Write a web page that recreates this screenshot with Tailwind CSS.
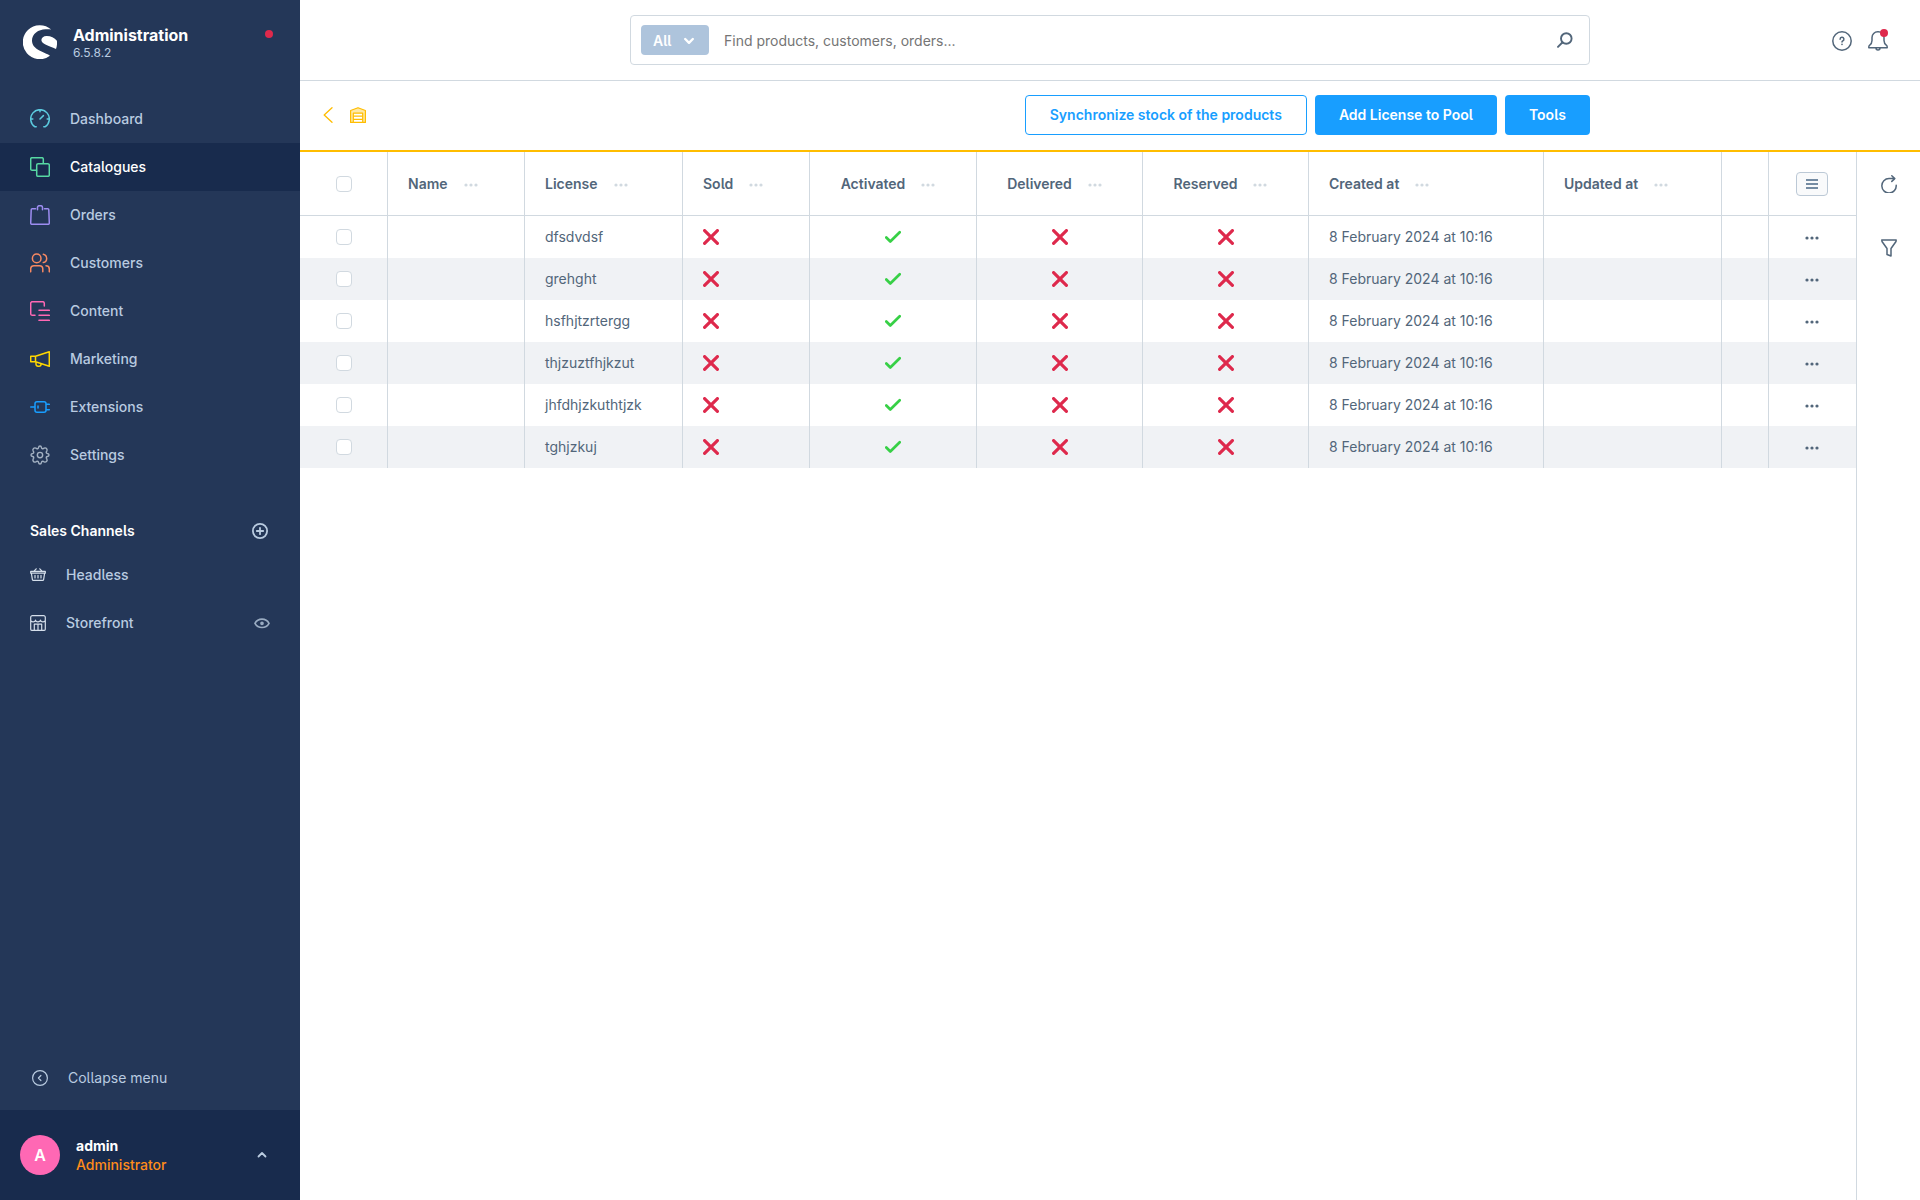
<!DOCTYPE html>
<html lang="en">
<head>
<meta charset="utf-8">
<meta name="viewport" content="width=device-width, initial-scale=1">
<title>License pool | Administration</title>
<script src="https://cdn.jsdelivr.net/npm/@tailwindcss/browser@4"></script>
</head>
<body class="flex min-h-screen bg-white font-['Inter',sans-serif] text-sm text-[#52667a] [font-feature-settings:'cv05']">

<svg class="hidden" aria-hidden="true">
  <symbol id="dots" viewBox="0 0 14 4"><circle cx="2" cy="2" r="1.6"/><circle cx="7" cy="2" r="1.6"/><circle cx="12" cy="2" r="1.6"/></symbol>
  <symbol id="cross" viewBox="0 0 16 16"><path d="M1.600 1.600l12.800 12.800M14.400 1.600L1.600 14.400" fill="none" stroke="currentColor" stroke-width="3.200" stroke-linecap="round"/></symbol>
  <symbol id="check" viewBox="0 0 16 16"><path d="M1.300 8.500L5.300 12.500 14.700 3.300" fill="none" stroke="currentColor" stroke-width="2.700" stroke-linecap="round" stroke-linejoin="round"/></symbol>
</svg>

<aside class="flex w-[300px] shrink-0 flex-col bg-[#243758] text-[#b9cbe0]">
  <header class="flex h-[95px] items-start pt-[25px] pl-[23px] pr-[27px]">
    <svg class="size-[34px] shrink-0" viewBox="0 0 34 34" fill="#fff" aria-hidden="true">
      <path d="M28.2 4.6A17 17 0 1 0 27 30.8C25.2 29.3 20.8 28 16.4 25.6 11.6 23 9 20 9 15.600 9 8.600 15.400 4.400 22.500 4.200 24.600 4.100 26.700 4.300 28.200 4.600Z"/>
      <path d="M33 24C34 21 34.300 18.600 33.900 15.800 31.500 12.400 27.500 10.900 23.500 11 20.500 11.100 18.300 12.800 18.400 15.200 18.600 18.800 25.500 20.500 33 24Z"/>
    </svg>
    <div class="ml-4 flex-1">
      <p class="text-base/5 font-bold text-white">Administration</p>
      <p class="text-xs/4">6.5.8.2</p>
    </div>
    <span class="mt-[5px] size-2 rounded-full bg-[#de294c]"></span>
  </header>

  <nav aria-label="Main menu">
    <ul class="font-medium">
      <li><a href="#" class="flex h-12 items-center gap-5 px-[30px]">
        <svg class="size-5" viewBox="0 0 20 20" fill="none" stroke="#5ccbdf" stroke-width="1.500" stroke-linecap="round" stroke-linejoin="round"><path d="M6.200 17.800H5A9.300 9.300 0 1 1 15 17.800H13.800M10 1v1.800M1 10h1.800M17.200 10H19M10 10l3.400-3.400"/></svg>Dashboard</a></li>
      <li><a href="#" aria-current="page" class="flex h-12 items-center gap-5 bg-[#182b4d] px-[30px] text-white">
        <svg class="size-5" viewBox="0 0 20 20" fill="none" stroke="#57d9a3" stroke-width="1.500" stroke-linejoin="round" stroke-linecap="round"><path d="M6.500 13.300H2A1.300 1.300 0 0 1 .7 12V2A1.300 1.300 0 0 1 2 .7h10A1.300 1.300 0 0 1 13.300 2V6"/><rect x="6.700" y="6.700" width="12.600" height="12.600" rx="1.400"/></svg>Catalogues</a></li>
      <li><a href="#" class="flex h-12 items-center gap-5 px-[30px]">
        <svg class="size-5" viewBox="0 0 20 20" fill="none" stroke="#9d8df1" stroke-width="1.500" stroke-linejoin="round" stroke-linecap="round"><path d="M5.500 3.800H2.200A1 1 0 0 0 1.200 4.800L.7 18A1.300 1.300 0 0 0 2 19.300H18A1.300 1.300 0 0 0 19.300 18L18.800 4.800A1 1 0 0 0 17.800 3.800H14.500M7.500 4.800V2.400A1.700 1.700 0 0 1 9.200.7h1.600A1.700 1.700 0 0 1 12.500 2.400V4.800"/></svg>Orders</a></li>
      <li><a href="#" class="flex h-12 items-center gap-5 px-[30px]">
        <svg class="size-5" viewBox="0 0 20 20" fill="none" stroke="#f88962" stroke-width="1.500" stroke-linecap="round"><circle cx="6.700" cy="5.400" r="4.300"/><path d="M.7 18.800V16A3.300 3.300 0 0 1 4 12.700H9.500A3.300 3.300 0 0 1 12.800 16v2.800M13.300 1.200A4.300 4.300 0 0 1 13.300 9.600M16 12.800A3.300 3.300 0 0 1 19.300 16v2.800"/></svg>Customers</a></li>
      <li><a href="#" class="flex h-12 items-center gap-5 px-[30px]">
        <svg class="size-5" viewBox="0 0 20 20" fill="none" stroke="#ff68b4" stroke-width="1.500" stroke-linecap="round" stroke-linejoin="round"><path d="M5 14.300H2.300A1.600 1.600 0 0 1 .7 12.700V2.300A1.600 1.600 0 0 1 2.300.7H12.700A1.600 1.600 0 0 1 14.300 2.300V5M9 9.300H19.300M9 14.300H19.300M9 19.300H19.300"/></svg>Content</a></li>
      <li><a href="#" class="flex h-12 items-center gap-5 px-[30px]">
        <svg class="size-5" viewBox="0 0 20 20" fill="none" stroke="#ffd700" stroke-width="1.500" stroke-linejoin="round"><path d="M.7 7.300H5.500V12.700H.7ZM5.500 7.300L19.300 2.700V17.300L5.500 12.700M6 12.900V15.200A2 2 0 0 0 8 17.200H9A2 2 0 0 0 11 15.200V14.500"/></svg>Marketing</a></li>
      <li><a href="#" class="flex h-12 items-center gap-5 px-[30px]">
        <svg class="size-5" viewBox="0 0 20 20" fill="none" stroke="#189eff" stroke-width="1.500" stroke-linecap="round"><rect x="5" y="4.700" width="11" height="10.600" rx="2"/><path d="M.7 10H4.500M16.500 7.300H19.300M16.500 12.700H19.300M8 9v2"/></svg>Extensions</a></li>
      <li><a href="#" class="flex h-12 items-center gap-5 px-[30px]">
        <svg class="size-5" viewBox="0 0 24 24" fill="none" stroke="#a3b1c2" stroke-width="1.700" stroke-linejoin="round"><circle cx="12" cy="12" r="3.200"/><path d="M10.200 3.100Q10.500 1.200 12 1.200T13.800 3.100Q14.200 5 16 4.300L17 3.700Q18.700 3 19.800 4.200T20.300 7L19.700 8Q19 9.800 20.900 10.200 22.800 10.500 22.800 12T20.900 13.800Q19 14.200 19.700 16L20.300 17Q21 18.700 19.800 19.800T17 20.300L16 19.700Q14.200 19 13.800 20.900 13.500 22.800 12 22.800T10.200 20.900Q9.800 19 8 19.700L7 20.300Q5.300 21 4.200 19.800T3.700 17L4.300 16Q5 14.200 3.100 13.800 1.200 13.500 1.200 12T3.100 10.200Q5 9.800 4.300 8L3.700 7Q3 5.300 4.200 4.200T7 3.700L8 4.300Q9.800 5 10.200 3.100Z"/></svg>Settings</a></li>
    </ul>
  </nav>

  <section class="mt-[34px]">
    <div class="flex h-9 items-center justify-between pr-8 pl-[30px]">
      <h2 class="font-semibold text-white">Sales Channels</h2>
      <button type="button" aria-label="Add sales channel"><svg class="size-4" viewBox="0 0 16 16" fill="none" stroke="currentColor" stroke-width="1.800" stroke-linecap="round"><circle cx="8" cy="8" r="7.100"/><path d="M8 4.800v6.400M4.800 8h6.400"/></svg></button>
    </div>
    <ul class="mt-0.5">
      <li><a href="#" class="flex h-12 items-center gap-5 px-[30px] font-medium">
        <svg class="size-4" viewBox="0 0 16 16" fill="none" stroke="#d5dfeb" stroke-width="1.200" stroke-linejoin="round" stroke-linecap="round"><path d="M.7 4.300H15.300V6.200H.7ZM1.400 6.300L2.400 12.600A1 1 0 0 0 3.400 13.400H12.600A1 1 0 0 0 13.600 12.600L14.600 6.300M4 4.200L6.200 1.800M12 4.200L9.800 1.800M5 8.300v2.700M8 8.300v2.700M11 8.300v2.700"/></svg>Headless</a></li>
      <li class="flex h-12 items-center justify-between px-[30px]"><a href="#" class="flex items-center gap-5 font-medium">
        <svg class="size-4" viewBox="0 0 16 16" fill="none" stroke="#d5dfeb" stroke-width="1.200" stroke-linejoin="round" stroke-linecap="round"><path d="M.7 5V14.300A1 1 0 0 0 1.700 15.300H14.300A1 1 0 0 0 15.300 14.300V5M.7 5V2.400A1.700 1.700 0 0 1 2.400.7H13.600A1.700 1.700 0 0 1 15.300 2.400V5A2.400 1.800 0 0 1 10.500 5 2.500 1.800 0 0 1 5.500 5 2.400 1.800 0 0 1 .7 5ZM4.300 15.200V9.200H11.700V15.200M8 9.200v6"/></svg>Storefront</a>
        <button type="button" aria-label="Open storefront"><svg class="size-4" viewBox="0 0 16 16" fill="none" stroke="#9aacc2" stroke-width="1.700"><path d="M1 8.300C2.500 5.500 5 4.100 8 4.100S13.500 5.500 15 8.300C13.500 11.100 11 12.500 8 12.500S2.500 11.100 1 8.300Z"/><circle cx="8" cy="8.300" r="1"/></svg></button></li>
    </ul>
  </section>

  <button type="button" class="mt-auto mb-2 flex h-12 items-center gap-5 px-8 text-left">
    <svg class="size-4" viewBox="0 0 16 16" fill="none" stroke="currentColor" stroke-width="1.200" stroke-linecap="round" stroke-linejoin="round"><circle cx="8" cy="8" r="7.400"/><path d="M8.900 5.500L6.400 8l2.500 2.500"/></svg>Collapse menu</button>

  <button type="button" class="flex h-[90px] items-center bg-[#182b4d] pr-[33px] pl-5 text-left">
    <span class="flex size-10 items-center justify-center rounded-full bg-[#ff68b4] text-base font-semibold text-white">A</span>
    <span class="ml-4 flex flex-1 flex-col leading-[19px]"><span class="font-bold text-white">admin</span><span class="font-medium text-[#ff8c1a]">Administrator</span></span>
    <svg class="h-2 w-[10px]" viewBox="0 0 10 8" fill="none" stroke="currentColor" stroke-width="1.800" stroke-linecap="round" stroke-linejoin="round"><path d="M1.500 5.500L5 2l3.500 3.500"/></svg>
  </button>
</aside>

<div class="flex min-w-0 flex-1 flex-col">
  <header class="grid h-[81px] grid-cols-[1fr_minmax(0,960px)_1fr] items-center border-b border-[#d1d9e0]">
    <form class="col-start-2 flex h-[50px] items-center rounded border border-[#d1d9e0] px-[10px]" role="search">
      <div class="relative">
        <select aria-label="Search in" class="block h-[30px] w-[68px] appearance-none rounded bg-[#aec4dc] pt-0.5 pl-3 font-semibold text-white"><option>All</option></select>
        <svg class="pointer-events-none absolute top-[12px] right-[15px] h-2 w-[10px]" viewBox="0 0 10 8" fill="none" stroke="#fff" stroke-width="2.400" stroke-linecap="round" stroke-linejoin="round"><path d="M1.200 2L5 5.800 8.800 2"/></svg>
      </div>
      <input type="text" aria-label="Search" placeholder="Find products, customers, orders..." class="ml-[15px] min-w-0 flex-1 pt-0.5 outline-none placeholder:text-[#757575]">
      <button type="button" aria-label="Search" class="mr-1.5"><svg class="size-4" viewBox="0 0 16 16" fill="none" stroke="currentColor" stroke-width="1.900" stroke-linecap="round"><circle cx="9.300" cy="6.500" r="5.300"/><path d="M5.300 10.500L1 14.900"/></svg></button>
    </form>
    <div class="flex items-center justify-end gap-4 pt-0.5 pr-8">
      <button type="button" aria-label="Help"><svg class="size-5" viewBox="0 0 20 20" fill="none" stroke="currentColor" stroke-width="1.500" stroke-linecap="round"><circle cx="10" cy="10" r="9.200"/><path d="M8.100 8.200A1.900 1.900 0 1 1 10.700 10Q10 10.300 10 11.100"/><path d="M10 13.300v.1" stroke-width="1.600"/></svg></button>
      <button type="button" aria-label="Notifications" class="relative"><svg class="size-5" viewBox="0 0 20 20" fill="none" stroke="currentColor" stroke-width="1.500" stroke-linejoin="round"><path d="M4 9.500V6.500A5.700 5.700 0 0 1 9.700.8h.6A5.700 5.700 0 0 1 16 6.500V9.500Q16 12.500 18.500 14.300 19.300 15 19.200 16.700H.8Q.7 15 1.500 14.300 4 12.500 4 9.500ZM8 17a2 2 0 0 0 4 0"/></svg>
        <span class="absolute -top-0.5 right-0 size-2 rounded-full bg-[#de294c]"></span></button>
    </div>
  </header>

  <div class="grid h-[71px] grid-cols-[1fr_minmax(0,960px)_1fr] items-center border-b-2 border-[#ffbd00] pb-px text-[#ffbd00]">
    <div class="flex items-center gap-4 pl-[22px]">
      <a href="#" aria-label="Back"><svg class="h-4 w-3" viewBox="0 0 12 16" fill="none" stroke="currentColor" stroke-width="1.300" stroke-linecap="round" stroke-linejoin="round"><path d="M10 .7L2.200 8l7.800 7.300"/></svg></a>
      <svg class="size-4" viewBox="0 0 16 16" fill="none" stroke="currentColor" stroke-width="1.200" stroke-linejoin="round" aria-hidden="true"><path d="M.6 3.500L8 .7l7.400 2.800V15.400H12.700V6.200H3.300V15.400H.6Z" fill="#ffe9a6"/><path d="M3.300 9.200h9.400M3.300 12.300h9.400M3.300 15.300h9.400"/></svg>
    </div>
    <div class="flex justify-end gap-2 font-semibold">
      <button type="button" class="h-10 rounded border border-[#189eff] px-6 text-[#189eff]">Synchronize stock of the products</button>
      <button type="button" class="h-10 rounded bg-[#189eff] px-6 text-white">Add License to Pool</button>
      <button type="button" class="h-10 rounded bg-[#189eff] px-6 text-white">Tools</button>
    </div>
  </div>

  <div class="flex flex-1">
    <main class="min-w-0 flex-1">
      <table class="w-full table-fixed border-separate border-spacing-0">
        <colgroup><col class="w-[88px]"><col class="w-[137px]"><col class="w-[158px]"><col class="w-[127px]"><col class="w-[167px]"><col class="w-[166px]"><col class="w-[166px]"><col class="w-[235px]"><col class="w-[178px]"><col class="w-[47px]"><col class="w-[87px]"></colgroup>
        <thead><tr id="head"></tr></thead>
        <tbody id="rows"></tbody>
      </table>
    </main>
    <aside class="flex w-16 shrink-0 flex-col items-center gap-[46px] border-l border-[#d1d9e0] pt-[23px]">
      <button type="button" aria-label="Refresh"><svg class="block h-[18px] w-4" viewBox="0 0 16 18" fill="none" stroke="currentColor" stroke-width="1.500" stroke-linecap="round" stroke-linejoin="round"><path d="M15.200 10.200A7.200 7.200 0 1 1 8 3.600h5.800M10.800.8l3 2.800-3 2.800"/></svg></button>
      <button type="button" aria-label="Filter"><svg class="block h-[18px] w-4" viewBox="0 0 16 18" fill="none" stroke="currentColor" stroke-width="1.500" stroke-linejoin="round"><path d="M.8.900H15.200L15 2.500 10 9.500V17L6 15.500V9.500L1 2.500Z"/></svg></button>
    </aside>
  </div>
</div>

<script>
  const checkbox = label => `<input type="checkbox" aria-label="${label}" class="block size-4 mx-auto appearance-none rounded border border-[#d1d9e0] bg-white">`;
  const columns = [['Name'], ['License'], ['Sold'], ['Activated', 1], ['Delivered', 1], ['Reserved', 1], ['Created at'], ['Updated at']];
  const heading = ([name, centered]) => `
    <th scope="col" class="border-r border-b border-[#d1d9e0] p-0 font-semibold">
      <div class="${centered ? 'flex items-center justify-center' : 'flex items-center pl-5'}">${name}
        <button type="button" aria-label="${name} options" class="pt-[2px] pr-[10px] pl-4"><svg class="h-1 w-[14px] fill-[#d1d9e0]"><use href="#dots"/></svg></button>
      </div>
    </th>`;
  document.getElementById('head').innerHTML = `
    <th class="h-16 border-r border-b border-[#d1d9e0] p-0">${checkbox('Select all')}</th>
    ${columns.map(heading).join('')}
    <th class="border-r border-b border-[#d1d9e0] p-0"></th>
    <th class="border-b border-[#d1d9e0] p-0 pr-0.5"><button type="button" aria-label="Column settings" class="mx-auto flex h-6 w-8 items-center justify-center rounded border border-[#bcc9d6] bg-[#f9fafb]">
      <svg class="h-[10px] w-3 fill-[#758ca3]" viewBox="0 0 12 10"><path d="M0 0h12v2H0zM0 4h12v2H0zM0 8h12v2H0z"/></svg></button></th>`;

  const licenses = ['dfsdvdsf', 'grehght', 'hsfhjtzrtergg', 'thjzuztfhjkzut', 'jhfdhjzkuthtjzk', 'tghjzkuj'];
  const cell = 'border-r border-[#d1d9e0] p-0 pl-5';
  const iconCell = 'border-r border-[#d1d9e0] p-0';
  const no = '<svg class="size-4 text-[#de294c]" role="img" aria-label="No"><use href="#cross"/></svg>';
  const noCentered = '<svg class="mx-auto size-4 text-[#de294c]" role="img" aria-label="No"><use href="#cross"/></svg>';
  const yes = '<svg class="mx-auto size-4 text-[#37d046]" role="img" aria-label="Yes"><use href="#check"/></svg>';
  document.getElementById('rows').innerHTML = licenses.map(license => `
    <tr class="even:bg-[#f0f2f5]">
      <td class="h-[42px] border-r border-[#d1d9e0] p-0">${checkbox('Select ' + license)}</td>
      <td class="${cell}"></td>
      <td class="${cell}">${license}</td>
      <td class="${cell}">${no}</td>
      <td class="${iconCell}">${yes}</td>
      <td class="${iconCell}">${noCentered}</td>
      <td class="${iconCell}">${noCentered}</td>
      <td class="${cell}">8 February 2024 at 10:16</td>
      <td class="${cell}"></td>
      <td class="${iconCell}"></td>
      <td class="p-0 pr-0.5"><button type="button" aria-label="Actions for ${license}" class="mx-auto block pt-[2px]"><svg class="h-1 w-[14px] fill-[#52667a]"><use href="#dots"/></svg></button></td>
    </tr>`).join('');
</script>
</body>
</html>
